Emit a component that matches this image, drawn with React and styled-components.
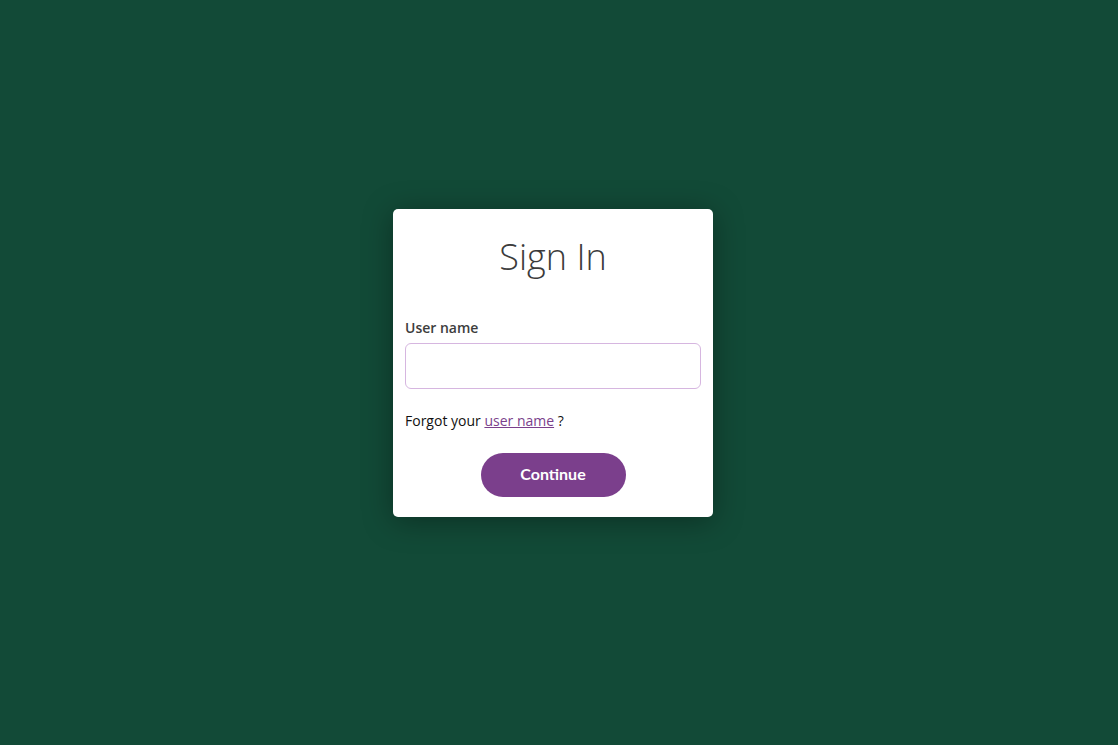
import styled, { createGlobalStyle } from "styled-components";

const GlobalStyle = createGlobalStyle`
  html, body {
    margin: 0;
    padding: 0;
    height: 100%;
  }
  body {
    background: #124a37;
    font-family: "Open Sans", "Liberation Sans", sans-serif;
  }
`;

const Page = styled.div`
  height: 745px;
  display: flex;
  justify-content: center;
  padding-top: 209px;
  box-sizing: border-box;
  padding-right: 12px;
`;

const Card = styled.div`
  width: 320px;
  height: 308px;
  box-sizing: border-box;
  background: #ffffff;
  border-radius: 5px;
  padding: 22px 12px 20px;
  box-shadow: 0 4px 30px rgba(0, 0, 0, 0.35);
  display: flex;
  flex-direction: column;
`;

const Title = styled.h1`
  margin: 0;
  text-align: center;
  font-family: "Open Sans", sans-serif;
  font-weight: 300;
  font-size: 36px;
  line-height: 52px;
  color: #3b3b3b;
`;

const Label = styled.label`
  margin-top: 35px;
  font-size: 14px;
  font-weight: 600;
  color: #3d3d3d;
  line-height: 20px;
`;

const Input = styled.input`
  margin-top: 5px;
  height: 46px;
  box-sizing: border-box;
  border: 1px solid #d6b6e0;
  border-radius: 6px;
  padding: 0 12px;
  font-family: "Open Sans", sans-serif;
  font-size: 14px;
  outline: none;
`;

const Hint = styled.p`
  margin: 22px 0 0;
  font-size: 14px;
  line-height: 20px;
  color: #111;
`;

const HintLink = styled.a`
  color: #7b3f8c;
  text-decoration: underline;
  cursor: pointer;
`;

const Actions = styled.div`
  display: flex;
  justify-content: center;
  margin-top: 22px;
`;

const Button = styled.button`
  width: 145px;
  height: 44px;
  border: 0;
  border-radius: 22px;
  padding: 0 0 3px;
  background: #7b3f8c;
  color: #ffffff;
  font-family: "Lato", "Open Sans", sans-serif;
  font-weight: 700;
  font-size: 16px;
  cursor: pointer;
`;

export default function App() {
  return (
    <>
      <GlobalStyle />
      <Page>
        <Card>
          <Title>Sign In</Title>
          <Label htmlFor="username">User name</Label>
          <Input id="username" type="text" />
          <Hint>
            Forgot your <HintLink>user name</HintLink> ?
          </Hint>
          <Actions>
            <Button>Continue</Button>
          </Actions>
        </Card>
      </Page>
    </>
  );
}
